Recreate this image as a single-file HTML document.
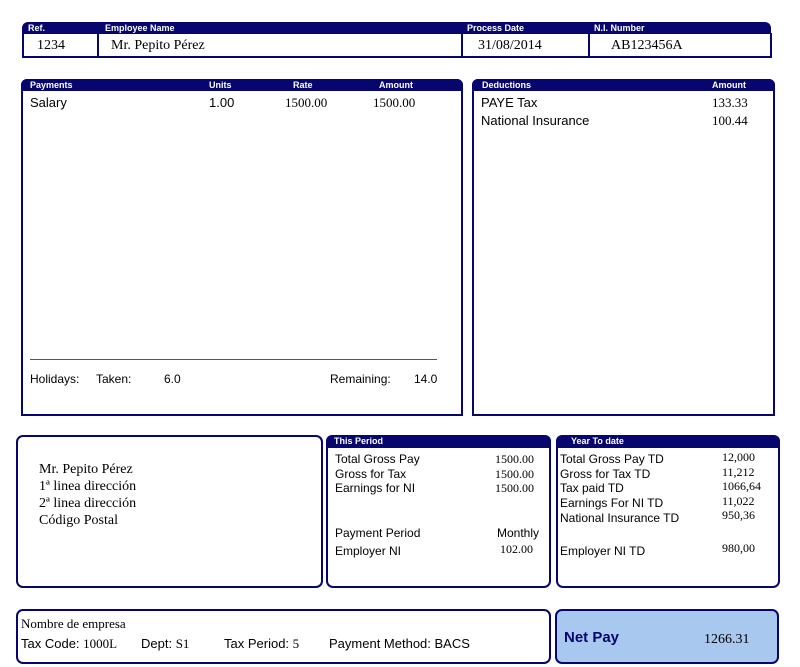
<!DOCTYPE html><html><head><style>
body{margin:0;width:800px;height:667px;background:#fff;position:relative;font-family:"Liberation Sans",sans-serif;overflow:hidden}
.a{position:absolute}
.bar{position:absolute;background:#06066e;color:#fff;font-weight:bold;font-size:9px;line-height:11px;border-radius:6px 6px 0 0}
.box{position:absolute;border:2px solid #06066e;box-sizing:border-box}
.s{font-family:"Liberation Serif",serif}
.t{font-size:12px}
</style></head><body>
<div class="bar" style="left:22px;top:22px;width:749px;height:12px"></div>
<div class="a" style="left:28px;top:22px;color:#fff;font:bold 9px 'Liberation Sans';line-height:12px">Ref.</div>
<div class="a" style="left:105px;top:22px;color:#fff;font:bold 9px 'Liberation Sans';line-height:12px">Employee Name</div>
<div class="a" style="left:467px;top:22px;color:#fff;font:bold 9px 'Liberation Sans';line-height:12px">Process Date</div>
<div class="a" style="left:594px;top:22px;color:#fff;font:bold 9px 'Liberation Sans';line-height:12px">N.I. Number</div>
<div class="box" style="left:22px;top:33px;width:750px;height:25px;border-top:none"></div>
<div class="a" style="left:97px;top:33px;width:2px;height:24px;background:#06066e"></div>
<div class="a" style="left:461px;top:33px;width:2px;height:24px;background:#06066e"></div>
<div class="a" style="left:588px;top:33px;width:2px;height:24px;background:#06066e"></div>
<div class="a s" style="left:37px;top:38px;font-size:14px">1234</div>
<div class="a s" style="left:111px;top:38px;font-size:14px">Mr. Pepito Pérez</div>
<div class="a s" style="left:478px;top:38px;font-size:14px">31/08/2014</div>
<div class="a s" style="left:611px;top:38px;font-size:14px">AB123456A</div>

<div class="box" style="left:21px;top:79px;width:442px;height:337px;border-radius:6px 6px 0 0"></div>
<div class="bar" style="left:21px;top:79px;width:442px;height:12px"></div>
<div class="a" style="left:30px;top:80px;color:#fff;font:bold 9px 'Liberation Sans'">Payments</div>
<div class="a" style="left:209px;top:80px;color:#fff;font:bold 9px 'Liberation Sans'">Units</div>
<div class="a" style="left:293px;top:80px;color:#fff;font:bold 9px 'Liberation Sans'">Rate</div>
<div class="a" style="left:379px;top:80px;color:#fff;font:bold 9px 'Liberation Sans'">Amount</div>
<div class="a" style="left:30px;top:95px;font-size:13px">Salary</div>
<div class="a" style="left:209px;top:95px;font-size:13px">1.00</div>
<div class="a s" style="left:285px;top:95px;font-size:13px">1500.00</div>
<div class="a s" style="left:373px;top:95px;font-size:13px">1500.00</div>
<div class="a" style="left:30px;top:359px;width:407px;height:1px;background:#555"></div>
<div class="a t" style="left:30px;top:372px">Holidays:</div>
<div class="a t" style="left:96px;top:372px">Taken:</div>
<div class="a t" style="left:164px;top:372px">6.0</div>
<div class="a t" style="left:330px;top:372px">Remaining:</div>
<div class="a t" style="left:414px;top:372px">14.0</div>

<div class="box" style="left:472px;top:79px;width:303px;height:337px;border-radius:6px 6px 0 0"></div>
<div class="bar" style="left:472px;top:79px;width:303px;height:12px"></div>
<div class="a" style="left:482px;top:80px;color:#fff;font:bold 9px 'Liberation Sans'">Deductions</div>
<div class="a" style="left:712px;top:80px;color:#fff;font:bold 9px 'Liberation Sans'">Amount</div>
<div class="a" style="left:481px;top:95px;font-size:13px">PAYE Tax</div>
<div class="a s" style="left:712px;top:95px;font-size:13px">133.33</div>
<div class="a" style="left:481px;top:113px;font-size:13px">National Insurance</div>
<div class="a s" style="left:712px;top:113px;font-size:13px">100.44</div>

<div class="box" style="left:16px;top:435px;width:307px;height:153px;border-radius:7px"></div>
<div class="a s" style="left:39px;top:461px;font-size:14px;line-height:17px">Mr. Pepito Pérez<br>1ª linea dirección<br>2ª linea dirección<br>Código Postal</div>

<div class="box" style="left:326px;top:435px;width:225px;height:153px;border-radius:7px"></div>
<div class="bar" style="left:326px;top:435px;width:225px;height:13px"></div>
<div class="a" style="left:334px;top:436px;color:#fff;font:bold 9px 'Liberation Sans'">This Period</div>
<div class="a t" style="left:335px;top:452px;line-height:14.5px">Total Gross Pay<br>Gross for Tax<br>Earnings for NI</div>
<div class="a s" style="left:495px;top:452px;font-size:12px;line-height:14.5px">1500.00<br>1500.00<br>1500.00</div>
<div class="a t" style="left:335px;top:526px">Payment Period</div>
<div class="a t" style="left:497px;top:526px">Monthly</div>
<div class="a t" style="left:335px;top:544px">Employer NI</div>
<div class="a s" style="left:500px;top:542px;font-size:12px">102.00</div>

<div class="box" style="left:556px;top:435px;width:224px;height:153px;border-radius:7px"></div>
<div class="bar" style="left:556px;top:435px;width:224px;height:13px"></div>
<div class="a" style="left:571px;top:436px;color:#fff;font:bold 9px 'Liberation Sans'">Year To date</div>
<div class="a t" style="left:560px;top:452px;line-height:14.7px">Total Gross Pay TD<br>Gross for Tax TD<br>Tax paid TD<br>Earnings For NI TD<br>National Insurance TD</div>
<div class="a s" style="left:722px;top:450px;font-size:12px;line-height:14.5px">12,000<br>11,212<br>1066,64<br>11,022<br>950,36</div>
<div class="a t" style="left:560px;top:544px">Employer NI TD</div>
<div class="a s" style="left:722px;top:541px;font-size:12px">980,00</div>

<div class="box" style="left:16px;top:609px;width:535px;height:55px;border-radius:7px"></div>
<div class="a s" style="left:21px;top:616px;font-size:13px">Nombre de empresa</div>
<div class="a" style="left:21px;top:636px;font-size:13px">Tax Code: <span class="s">1000L</span></div>
<div class="a" style="left:141px;top:636px;font-size:13px">Dept: <span class="s">S1</span></div>
<div class="a" style="left:224px;top:636px;font-size:13px">Tax Period: <span class="s">5</span></div>
<div class="a" style="left:329px;top:636px;font-size:13px">Payment Method: BACS</div>

<div class="box" style="left:555px;top:609px;width:224px;height:55px;border-radius:7px;background:#a9c8ef"></div>
<div class="a" style="left:564px;top:629px;font-size:15px;font-weight:bold;color:#06066e">Net Pay</div>
<div class="a s" style="left:704px;top:632px;font-size:14px">1266.31</div>
</body></html>
